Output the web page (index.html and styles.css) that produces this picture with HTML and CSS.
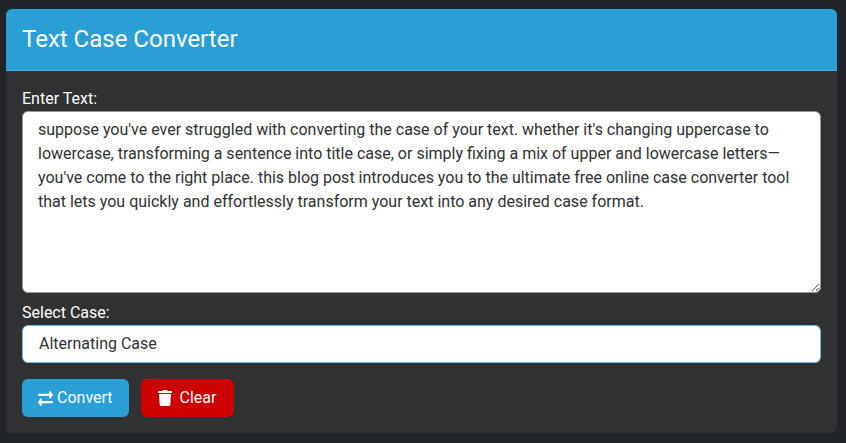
FILE: index.html
```html
<!DOCTYPE html>
<html>
<head>
    <title>Text Case Converter</title>
    <link rel="stylesheet" href="styles.css">
</head>
<body>
    <div class="card">
        <div class="card-header">Text Case Converter</div>
        <div class="card-body">
            <label class="field-label" for="inputText">Enter Text:</label>
            <textarea class="text-input" id="inputText">suppose you've ever struggled with converting the case of your text. whether it's changing uppercase to lowercase, transforming a sentence into title case, or simply fixing a mix of upper and lowercase letters—you've come to the right place. this blog post introduces you to the ultimate free online case converter tool that lets you quickly and effortlessly transform your text into any desired case format.</textarea>
            <label class="field-label second" for="caseSelect">Select Case:</label>
            <select class="case-select" id="caseSelect">
                <option>Alternating Case</option>
            </select>
            <div class="actions">
                <button class="btn btn-convert">
                    <svg class="icon-exchange" viewBox="0 56 512 400" preserveAspectRatio="none"><path d="M0 168v-16c0-13.255 10.745-24 24-24h360V80c0-21.367 25.899-32.042 40.971-16.971l80 80c9.372 9.373 9.372 24.569 0 33.941l-80 80C409.956 271.982 384 261.456 384 240v-48H24c-13.255 0-24-10.745-24-24zm488 152H128v-48c0-21.314-25.862-32.08-40.971-16.971l-80 80c-9.372 9.373-9.372 24.569 0 33.941l80 80C102.057 463.997 128 453.437 128 432v-48h360c13.255 0 24-10.745 24-24v-16c0-13.255-10.745-24-24-24z"/></svg>
                    Convert
                </button>
                <button class="btn btn-clear">
                    <svg class="icon-trash" viewBox="0 0 448 512"><path d="M432 32H312l-9.4-18.7A24 24 0 0 0 281.1 0H166.8a23.72 23.72 0 0 0-21.4 13.3L136 32H16A16 16 0 0 0 0 48v32a16 16 0 0 0 16 16h416a16 16 0 0 0 16-16V48a16 16 0 0 0-16-16zM53.2 467a48 48 0 0 0 47.9 45h245.8a48 48 0 0 0 47.9-45L416 128H32z"/></svg>
                    Clear
                </button>
            </div>
        </div>
    </div>
</body>
</html>
```

FILE: styles.css
```css
body {
    margin: 0;
    padding: 9px 9px 10px 6px;
    background-color: #212529;
    color: #fff;
    font-family: Roboto, "Liberation Sans", sans-serif;
    font-size: 16px;
    line-height: 24px;
}

.card {
    background-color: #303133;
    border-radius: 6px;
    overflow: hidden;
}

.card-header {
    background-color: #2a9fd6;
    border-bottom: 1px solid #4aaedc;
    padding: 12px 16px 13px;
    font-size: 24px;
    line-height: 36px;
}

.card-body {
    padding: 16px;
}

.field-label {
    display: block;
    height: 24px;
}

.field-label.second {
    margin-top: 8px;
}

.text-input {
    display: block;
    box-sizing: border-box;
    width: 100%;
    height: 182px;
    padding: 6px 15px;
    background-color: #fff;
    border: 1px solid #999;
    border-radius: 6px;
    color: #303133;
    font: inherit;
    outline: none;
}

.case-select {
    display: block;
    box-sizing: border-box;
    width: 100%;
    height: 38px;
    padding: 6px 16px;
    background-color: #fff;
    border: 1px solid #6fbce0;
    border-radius: 6px;
    color: #303133;
    font: inherit;
    appearance: none;
    outline: none;
}

.actions {
    display: flex;
    gap: 12px;
    margin-top: 16px;
}

.btn {
    display: flex;
    align-items: center;
    height: 38px;
    padding: 0 16px;
    border: 0;
    border-radius: 6px;
    color: #fff;
    font: inherit;
}

.btn svg {
    fill: #fff;
    height: 16px;
}

.btn-convert {
    background-color: #2a9fd6;
    gap: 4px;
}

.btn-clear {
    background-color: #cc0000;
    gap: 8px;
    padding: 0 18px 0 17px;
}

.btn svg.icon-exchange {
    width: 15px;
    height: 15px;
}

.icon-trash {
    width: 14px;
}
```
